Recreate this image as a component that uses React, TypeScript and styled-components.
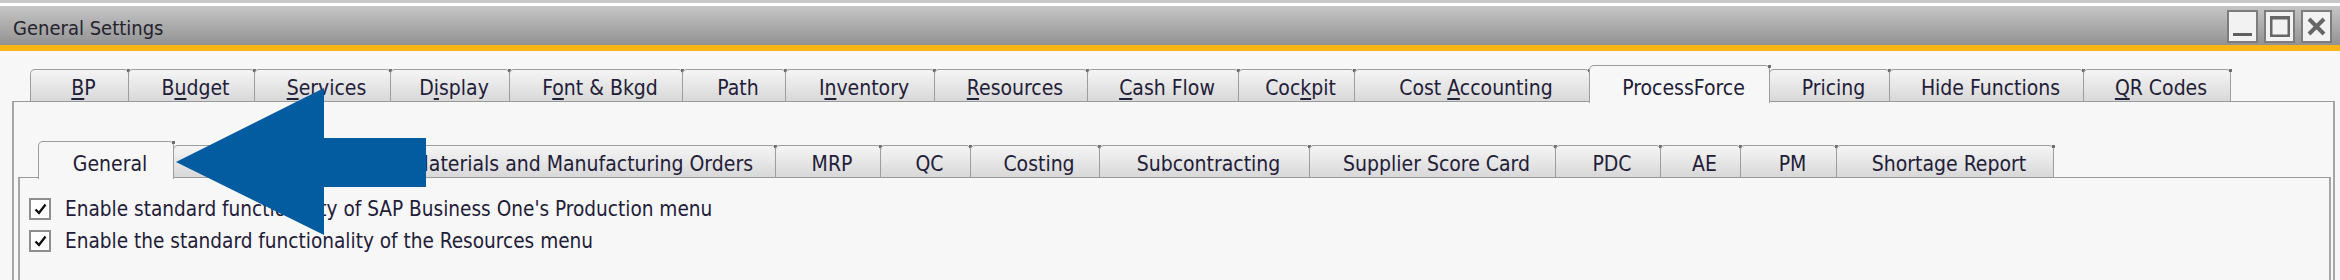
import React from "react";
import styled, { createGlobalStyle } from "styled-components";

const Global = createGlobalStyle`
  html, body { margin: 0; padding: 0; background: #f7f7f7; }
  body {
    font-family: "DejaVu Sans Condensed", "DejaVu Sans", sans-serif;
    font-stretch: condensed;
    color: #1f2038;
  }
`;

const Window = styled.div`
  position: relative;
  width: 2340px;
  height: 280px;
  overflow: hidden;
  background: #f7f7f7;
  border-top: 3px solid #c8c8c8;
  box-sizing: border-box;
`;

const TitleBar = styled.div`
  height: 39px;
  border-top: 3px solid #ffffff;
  border-bottom: 6px solid #fbb416;
  background: linear-gradient(#c6c6c6, #929292);
  display: flex;
  align-items: center;
  justify-content: space-between;
  padding: 0 8px 0 13px;
`;

const Title = styled.span`
  font-size: 20px;
  color: #24232e;
  padding-top: 4px;
`;

const Controls = styled.div`
  display: flex;
  gap: 6px;
  align-self: flex-end;
  margin-bottom: 2px;
`;

const WinButton = styled.div`
  width: 31px;
  height: 33px;
  box-sizing: border-box;
  border: 2px solid #7c7c7c;
  background: #f2f2f2;
  display: flex;
  align-items: center;
  justify-content: center;
`;

const Body = styled.div`
  padding: 0 5px 0 12px;
`;

const TabStrip = styled.div<{ $h: number; $pl: number }>`
  display: flex;
  align-items: flex-end;
  height: ${(p) => p.$h}px;
  padding-left: ${(p) => p.$pl}px;
  box-sizing: border-box;
  position: relative;
  z-index: 1;
`;

const Tab = styled.div<{ $w: number; $active?: boolean; $end?: boolean }>`
  box-sizing: border-box;
  flex: none;
  width: ${(p) => p.$w}px;
  height: ${(p) => (p.$active ? 38 : 32)}px;
  margin-bottom: ${(p) => (p.$active ? -2 : 0)}px;
  margin-left: -1px;
  border: 1px solid #9d9d9d;
  border-bottom: none;
  border-radius: 5px 5px 0 0;
  background: ${(p) =>
    p.$active ? "#f7f7f7" : "linear-gradient(#f5f5f5, #d8d8d8)"};
  display: flex;
  align-items: center;
  justify-content: ${(p) => (p.$end ? "flex-end" : "center")};
  padding: ${(p) => (p.$active ? "7px 0 0 8px" : "5px 0 0 8px")};
  padding-right: ${(p) => (p.$end ? "22px" : "0")};
  font-size: 21px;
  white-space: nowrap;
  color: #1f2038;
  position: relative;
  z-index: ${(p) => (p.$active ? 2 : 1)};
  &::after {
    content: "";
    position: absolute;
    right: -2px;
    top: -1px;
    width: 3px;
    height: 3px;
    background: #6f6f6f;
  }
`;

const TabText = styled.span`
  white-space: pre;
`;

const Key = styled.span`
  text-decoration: underline;
  text-underline-offset: 3px;
`;

const OuterPanel = styled.div`
  border: 2px solid #a6a6a6;
  border-top: 1px solid #9a9a9a;
  border-bottom: none;
  height: 200px;
  padding: 0 2px 0 4px;
`;

const InnerPanel = styled.div`
  border: 2px solid #a6a6a6;
  border-top: 1px solid #9a9a9a;
  border-bottom: none;
  height: 120px;
  padding: 15px 0 0 9px;
`;

const CheckRow = styled.label`
  display: flex;
  align-items: center;
  height: 32px;
  gap: 14px;
  font-size: 20.6px;
  color: #1f2038;
`;

const Box = styled.span`
  width: 22px;
  height: 22px;
  box-sizing: border-box;
  border: 2px solid #8e8e8e;
  background: #ffffff;
  display: flex;
  align-items: center;
  justify-content: center;
`;

const Arrow = styled.svg`
  position: absolute;
  left: 0;
  top: 0;
  z-index: 5;
`;

type T = { label: React.ReactNode; w: number; active?: boolean; end?: boolean };

const row1: T[] = [
  { label: <><Key>B</Key>P</>, w: 99 },
  { label: <>B<Key>u</Key>dget</>, w: 127 },
  { label: <><Key>S</Key>ervices</>, w: 137 },
  { label: <>D<Key>i</Key>splay</>, w: 120 },
  { label: <>F<Key>o</Key>nt &amp; Bkgd</>, w: 174 },
  { label: "Path", w: 104 },
  { label: <>I<Key>n</Key>ventory</>, w: 150 },
  { label: <><Key>R</Key>esources</>, w: 154 },
  { label: <><Key>C</Key>ash Flow</>, w: 152 },
  { label: <>Coc<Key>k</Key>pit</>, w: 117 },
  { label: <>{"Cost "}<Key>A</Key>ccounting</>, w: 236 },
  { label: "ProcessForce", w: 181, active: true },
  { label: "Pricing", w: 121 },
  { label: "Hide Functions", w: 195 },
  { label: <><Key>Q</Key>R Codes</>, w: 148 },
];

const row2: T[] = [
  { label: "General", w: 136, active: true },
  { label: "Bill of Materials and Manufacturing Orders", w: 603, end: true },
  { label: "MRP", w: 106 },
  { label: "QC", w: 91 },
  { label: "Costing", w: 130 },
  { label: "Subcontracting", w: 211 },
  { label: "Supplier Score Card", w: 247 },
  { label: "PDC", w: 106 },
  { label: "AE", w: 81 },
  { label: "PM", w: 97 },
  { label: "Shortage Report", w: 218 },
];

const Check = () => (
  <svg width="13" height="12" viewBox="0 0 13 12">
    <path d="M1.5 6.5 L5 10 L11.5 1.5" fill="none" stroke="#111" strokeWidth="2.4" />
  </svg>
);

export default function App() {
  return (
    <>
      <Global />
      <Window>
        <TitleBar>
          <Title>General Settings</Title>
          <Controls>
            <WinButton>
              <svg width="27" height="29" viewBox="0 0 27 29">
                <rect x="4" y="21" width="19" height="3" fill="#5f5f5f" />
              </svg>
            </WinButton>
            <WinButton>
              <svg width="27" height="29" viewBox="0 0 27 29">
                <rect x="5.25" y="5.25" width="17.5" height="18.5" fill="none" stroke="#666" strokeWidth="2.5" />
                <rect x="4" y="4" width="20" height="3.5" fill="#666" />
              </svg>
            </WinButton>
            <WinButton>
              <svg width="27" height="29" viewBox="0 0 27 29">
                <path d="M6 7 L21 22 M21 7 L6 22" stroke="#666" strokeWidth="4" />
              </svg>
            </WinButton>
          </Controls>
        </TitleBar>
        <Body>
          <TabStrip $h={50} $pl={19}>
            {row1.map((t, i) => (
              <Tab key={i} $w={t.w} $active={t.active}>
                <TabText>{t.label}</TabText>
              </Tab>
            ))}
          </TabStrip>
          <OuterPanel>
            <TabStrip $h={75} $pl={21}>
              {row2.map((t, i) => (
                <Tab key={i} $w={t.w} $active={t.active} $end={t.end}>
                  <TabText>{t.label}</TabText>
                </Tab>
              ))}
            </TabStrip>
            <InnerPanel>
              <CheckRow>
                <Box><Check /></Box>
                Enable standard functionality of SAP Business One's Production menu
              </CheckRow>
              <CheckRow>
                <Box><Check /></Box>
                Enable the standard functionality of the Resources menu
              </CheckRow>
            </InnerPanel>
          </OuterPanel>
        </Body>
        <Arrow width="2340" height="280" viewBox="0 0 2340 280">
          <polygon
            points="176,159 324,85 324,135 426,135 426,184 324,184 324,232"
            fill="#035ca0"
          />
        </Arrow>
      </Window>
    </>
  );
}
